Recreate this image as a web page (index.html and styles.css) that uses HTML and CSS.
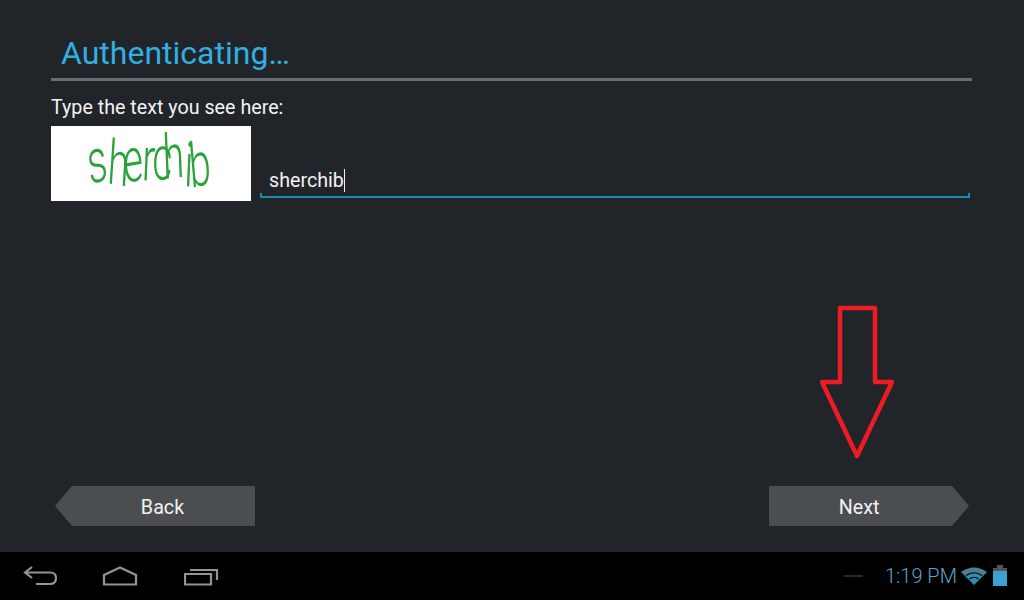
FILE: index.html
```html
<!DOCTYPE html>
<html lang="en">
<head>
    <meta charset="UTF-8">
    <meta name="viewport" content="width=device-width, initial-scale=1.0">
    <title>Authenticating</title>
    <link rel="stylesheet" href="styles.css">
</head>
<body>

    <div class="pantalla">
        <h1 class="titulo">Authenticating…</h1>
        <div class="divisor"></div>

        <label class="etiqueta" for="captcha">Type the text you see here:</label>
        <div class="fila-captcha">
            <div class="captcha">
                <svg width="200" height="75" viewBox="0 0 200 75">
                    <g transform="scale(.62 1)">
                        <text class="captcha-texto" x="63 90 118 146 163 182 214 226" y="59 57 57 54 53 53 60 62" rotate="-12 6 -6 4 2 -4 4 -8">sherchib</text>
                    </g>
                </svg>
            </div>
            <div class="campo">
                <span id="captcha">sherchib</span><span class="cursor"></span>
            </div>
        </div>

        <div class="botones">
            <div class="boton boton-atras">Back</div>
            <div class="boton boton-siguiente">Next</div>
        </div>

        <!-- Flecha roja sobre el contenido -->
        <svg class="flecha" width="76" height="156" viewBox="0 0 76 156">
            <path d="M20 3H55V77H72L37 151L2 77H20Z"/>
        </svg>
    </div>

    <div class="barra">
        <div class="nav">
            <svg width="36" height="24" viewBox="0 0 36 24">
                <path d="M10 3L3 8.500L10 14M3 8.500H28Q34 8.500 34 14Q34 20 28 20H14"/>
            </svg>
            <svg width="38" height="24" viewBox="0 0 38 24">
                <path d="M2 20.500V11L18 3.500L34 11V20.500Z"/>
            </svg>
            <svg width="36" height="24" viewBox="0 0 36 24">
                <path d="M1 10H27V20.500H1ZM6 6H33V16"/>
            </svg>
        </div>
        <div class="estado">
            <span class="guion"></span>
            <span class="hora">1:19 PM</span>
            <svg class="wifi" width="26" height="20" viewBox="0 0 26 20">
                <path d="M13 19L0 6Q13 -3 26 6Z"/>
                <path class="wifi-arco" d="M1.500 6Q13 -1.500 24.500 6L21 9.500Q13 4 5 9.500Z"/>
                <path class="wifi-linea" d="M5 9.500Q13 4 21 9.500M8.500 13Q13 9.500 17.500 13"/>
            </svg>
            <div class="bateria"></div>
        </div>
    </div>

</body>
</html>
```

FILE: styles.css
```css
html, body {
    margin: 0;
    height: 100%;
}
body {
    width: 1024px;
    height: 600px;
    overflow: hidden;
    display: flex;
    flex-direction: column;
    font-family: Roboto, "Liberation Sans", sans-serif;
    background-color: #212529;
    color: #f2f2f2;
}
.pantalla {
    position: relative;
    flex: 1;
    display: flex;
    flex-direction: column;
    padding: 0 52px 26px 51px;
}
.titulo {
    margin: 32px 0 0 10px;
    font-size: 32px;
    line-height: 42px;
    font-weight: 400;
    color: #33aee0;
}
.divisor {
    height: 3px;
    margin-top: 4px;
    background-color: #6a6c6e;
}
.etiqueta {
    margin-top: 15px;
    font-size: 19.700px;
    line-height: 24px;
}
.fila-captcha {
    display: flex;
    align-items: flex-start;
    gap: 9px;
    margin-top: 6px;
}
.captcha {
    width: 200px;
    height: 75px;
    background-color: #fff;
}
.captcha svg {
    display: block;
}
.captcha-texto {
    font-size: 62px;
    font-weight: 300;
    fill: #2aa23a;
}
.campo {
    position: relative;
    flex: 1;
    height: 30px;
    margin: 39px 2px 0 0;
    padding: 0 0 1px 9px;
    display: flex;
    align-items: center;
    border-bottom: 2px solid #1b8db5;
    font-size: 19.700px;
}
.campo::before,
.campo::after {
    content: "";
    position: absolute;
    bottom: 0;
    width: 2px;
    height: 3px;
    background-color: #1b8db5;
}
.campo::before {
    left: 0;
}
.campo::after {
    right: 0;
}
.cursor {
    width: 1px;
    height: 23px;
    background-color: #f2f2f2;
}
.botones {
    margin-top: auto;
    display: flex;
    justify-content: space-between;
    padding: 0 3px 0 4px;
}
.boton {
    width: 200px;
    height: 40px;
    line-height: 43px;
    text-align: center;
    font-size: 19.700px;
    box-sizing: border-box;
    background-color: #4b4e50;
}
.boton-atras {
    clip-path: polygon(17px 0, 100% 0, 100% 100%, 17px 100%, 0 50%);
    padding-left: 15px;
}
.boton-siguiente {
    clip-path: polygon(0 0, 183px 0, 100% 50%, 183px 100%, 0 100%);
    padding-right: 20px;
}
.flecha {
    position: absolute;
    left: 820px;
    top: 305px;
}
.flecha path {
    fill: none;
    stroke: #ed1c24;
    stroke-width: 4.500;
    stroke-linejoin: round;
}
.barra {
    height: 48px;
    flex: none;
    display: flex;
    align-items: center;
    justify-content: space-between;
    background-color: #000;
    padding: 0 17px 0 22px;
}
.nav {
    display: flex;
    align-items: center;
    gap: 44px;
}
.nav svg {
    fill: none;
    stroke: #949494;
    stroke-width: 2.200;
}
.estado {
    display: flex;
    align-items: center;
}
.guion {
    width: 19px;
    height: 2px;
    margin-right: 22px;
    background-color: #2a2a2a;
}
.hora {
    font-size: 20px;
    font-weight: 300;
    color: #55a8cc;
}
.wifi {
    margin-left: 4px;
    fill: #2f8db5;
}
.wifi-arco {
    fill: #5b7a87;
}
.wifi-linea {
    fill: none;
    stroke: #000;
    stroke-width: 1.200;
}
.bateria {
    position: relative;
    width: 14px;
    height: 18px;
    margin-left: 6px;
    margin-top: 2px;
    background: linear-gradient(#555 3px, #3ba3d0 3px);
}
.bateria::before {
    content: "";
    position: absolute;
    top: -3px;
    left: 4px;
    width: 6px;
    height: 3px;
    background-color: #555;
}
```
